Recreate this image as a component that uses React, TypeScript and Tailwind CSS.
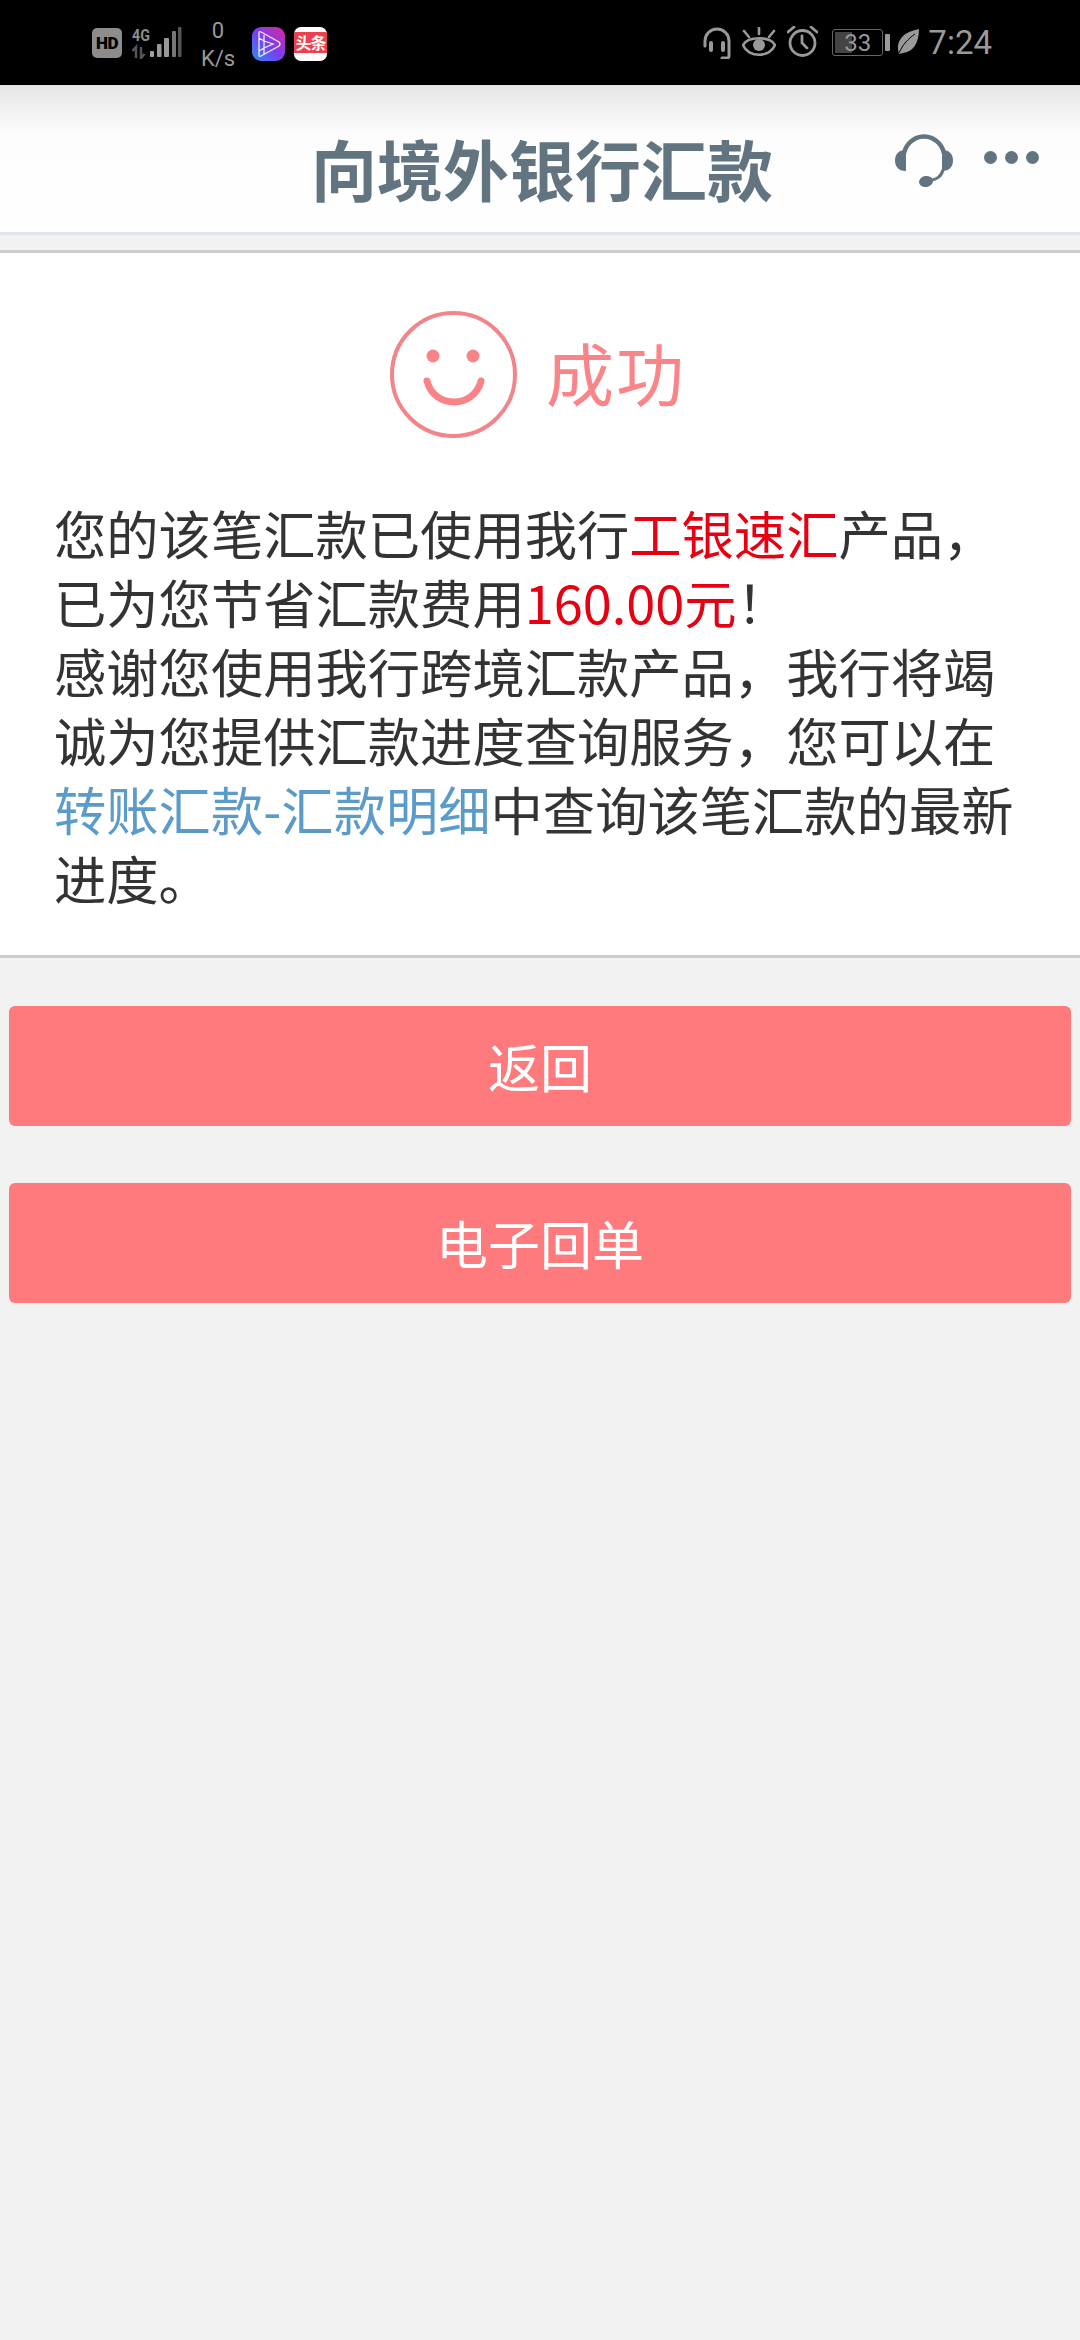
const cjk = { fontFamily: '"Noto Sans CJK SC", "Liberation Sans", sans-serif' };

function StatusBar() {
  return (
    <div className="h-[85px] bg-black flex items-start text-[#9a9a9a] shrink-0" style={{ fontFamily: '"Roboto", "Liberation Sans", sans-serif' }}>
      <div className="ml-[92px] mt-[28px] w-[30px] h-[30px] rounded-[5px] bg-[#8c8c8c] text-center text-black text-[17px] font-black leading-[30px] tracking-[-0.5px]">HD</div>
      <svg className="ml-[10px] mt-[21px]" width="50" height="38" viewBox="0 -6 50 38">
        <text x="0" y="14" fontSize="17" fontWeight="700" fill="#8c8c8c" fontFamily="Roboto" textLength="18" lengthAdjust="spacingAndGlyphs">4G</text>
        <path d="M4 31V20l-3.500 4M9 20v11l3.500-4" stroke="#555" strokeWidth="2.500" fill="none" />
        <rect x="18" y="24" width="4" height="6" rx="1" fill="#a0a0a0" />
        <rect x="25" y="17" width="4.500" height="13" rx="1" fill="#999" />
        <rect x="32" y="11" width="5" height="19" rx="1" fill="#999" />
        <rect x="40" y="4" width="4" height="26" rx="1" fill="#777" />
        <rect x="46" y="0" width="3.500" height="30" rx="1" fill="#555" />
      </svg>
      <div className="ml-[18px] mt-[17px] w-[36px] flex flex-col items-center text-[22px] leading-[28px]">
        <span>0</span>
        <span>K/s</span>
      </div>
      <svg className="ml-[16px] mt-[27px]" width="33" height="34" viewBox="0 0 33 34">
        <defs>
          <linearGradient id="pl" x1="0" y1="1" x2="1" y2="0">
            <stop offset="0" stopColor="#2f8cf5" />
            <stop offset="0.5" stopColor="#7a3df0" />
            <stop offset="1" stopColor="#e0269a" />
          </linearGradient>
        </defs>
        <rect width="33" height="34" rx="9" fill="url(#pl)" />
        <path d="M7 6Q7 4 9 5L27 15Q29 17 27 19L9 29Q7 30 7 28ZM12 8V27M7 11L12 14L21 17L12 21L7 24" stroke="#fff" strokeWidth="1.300" fill="none" opacity="0.9" />
      </svg>
      <div className="ml-[9px] mt-[27px] w-[33px] h-[34px] rounded-[7px] bg-white overflow-hidden flex items-center">
        <div className="w-full h-[21px] mb-[3px] bg-[#ee3f4d] text-white text-[16px] font-bold leading-[21px] text-center tracking-[-1px]" style={cjk}>头条</div>
      </div>
      <div className="flex-1" />
      <svg className="mt-[26px]" width="30" height="33" viewBox="0 0 30 33" fill="none" stroke="#999" strokeWidth="3" strokeLinecap="round">
        <path d="M3 20V15a12 12 0 0 1 24 0v15a2 2 0 0 1-2 2h-5" />
        <path d="M9 17v7M21 17v7" strokeWidth="4" />
      </svg>
      <svg className="ml-[10px] mt-[27px]" width="34" height="30" viewBox="0 0 34 30" fill="none" stroke="#999" strokeWidth="2.600" strokeLinecap="round">
        <path d="M1 18C6 9 28 9 33 18C28 31 6 31 1 18Z" />
        <circle cx="17" cy="18" r="6" fill="#999" stroke="none" />
        <path d="M17 1v6M2 4l5 6M32 4l-5 6" />
      </svg>
      <svg className="ml-[11px] mt-[26px]" width="31" height="31" viewBox="0 0 31 31" fill="none" stroke="#999" strokeWidth="2.800" strokeLinecap="round">
        <circle cx="15.500" cy="17" r="12.500" />
        <path d="M15 10v7l5 5M1 6l6-5M30 6l-6-5" />
      </svg>
      <div className="relative ml-[14px] mt-[29px] w-[51px] h-[27px] border-[1.5px] border-[#666] rounded-[3px] overflow-hidden">
        <div className="absolute left-[2px] top-[2px] bottom-[2px] w-[17px] bg-[#444]" />
        <div className="absolute inset-0 flex items-center justify-center text-[24px] leading-none text-[#999]">33</div>
      </div>
      <div className="ml-[2px] mt-[34px] w-[5px] h-[17px] bg-[#999] rounded-[1px]" />
      <svg className="ml-[6px] mt-[29px]" width="24" height="25" viewBox="0 0 24 25">
        <path d="M23 0C23 14 17 23 7 24L3 25C-1 13 6 3 23 0Z" fill="#999" />
        <path d="M3 24C7 15 12 10 19 5" stroke="#000" strokeWidth="1" fill="none" />
      </svg>
      <div className="ml-[8px] mr-[88px] mt-[25px] text-[33px] leading-[36px]">7:24</div>
    </div>
  );
}

function NavBar() {
  return (
    <div className="relative h-[150px] shrink-0 bg-gradient-to-b from-[#e6e6e6] via-[#fdfdfd] via-[35%] to-white border-b-[3px] border-[#dde4ec] flex items-center justify-center">
      <h1 className="text-[66px] font-bold leading-none text-[#62747f] mt-[16px] ml-[4px]" style={cjk}>向境外银行汇款</h1>
      <svg className="absolute left-[895px] top-[49px]" width="58" height="53" viewBox="0 0 58 53" fill="none">
        <path d="M8.500 24A20.500 21.500 0 0 1 49.500 24" stroke="#62747f" strokeWidth="4.500" />
        <path d="M11 16V37C3 37 0 32 0 26.500C0 21 3 16 11 16Z" fill="#62747f" />
        <path d="M47 16V37C55 37 58 32 58 26.500C58 21 55 16 47 16Z" fill="#62747f" />
        <path d="M48 36C46 43 42 45 34 47" stroke="#62747f" strokeWidth="3" />
        <ellipse cx="31" cy="47.500" rx="7" ry="5.500" transform="rotate(-10 31 47.500)" fill="#62747f" />
      </svg>
      <div className="absolute left-[984px] top-[66px] flex gap-[8px]">
        <span className="w-[13px] h-[13px] rounded-full bg-[#62747f]" />
        <span className="w-[13px] h-[13px] rounded-full bg-[#62747f]" />
        <span className="w-[13px] h-[13px] rounded-full bg-[#62747f]" />
      </div>
    </div>
  );
}

export default function App() {
  return (
    <div className="w-[1080px] h-[2340px] bg-[#f2f2f2] flex flex-col overflow-hidden" style={cjk}>
      <StatusBar />
      <NavBar />
      <section className="mt-[15px] h-[708px] shrink-0 bg-white border-y-[3px] border-[#cccccc] flex flex-col">
        <div className="mt-[58px] ml-[390px] flex items-center">
          <svg width="127" height="127" viewBox="0 0 127 127" fill="none">
            <circle cx="63.500" cy="63.500" r="61.500" strokeWidth="4" stroke="#f2858a" />
            <circle cx="43" cy="45" r="6.500" fill="#f98387" />
            <circle cx="83" cy="45" r="6.500" fill="#f98387" />
            <path d="M37 70C44 98 84 98 91 70" strokeWidth="7" strokeLinecap="round" stroke="#f98387" />
          </svg>
          <span className="ml-[29px] mb-[6px] text-[68px] leading-none text-[#fb8488] tracking-[2px]">成功</span>
        </div>
        <p className="mt-[60px] ml-[54px] w-[1015px] text-[52.3px] leading-[69px] text-[#333333]">
          您的该笔汇款已使用我行<span className="text-[#e60012]">工银速汇</span>产品，<br />
          已为您节省汇款费用<span className="text-[#e60012]">160.00元</span>！<br />
          感谢您使用我行跨境汇款产品，我行将竭<br />
          诚为您提供汇款进度查询服务，您可以在<br />
          <span className="text-[#5a9bc9]">转账汇款-汇款明细</span>中查询该笔汇款的最新<br />
          进度。
        </p>
      </section>
      <div className="mt-[48px] mx-[9px] flex flex-col gap-[57px]">
        <button className="h-[120px] rounded-[6px] bg-[#ff7a7c] text-white text-[52px] leading-none">返回</button>
        <button className="h-[120px] rounded-[6px] bg-[#ff7a7c] text-white text-[52px] leading-none">电子回单</button>
      </div>
    </div>
  );
}
